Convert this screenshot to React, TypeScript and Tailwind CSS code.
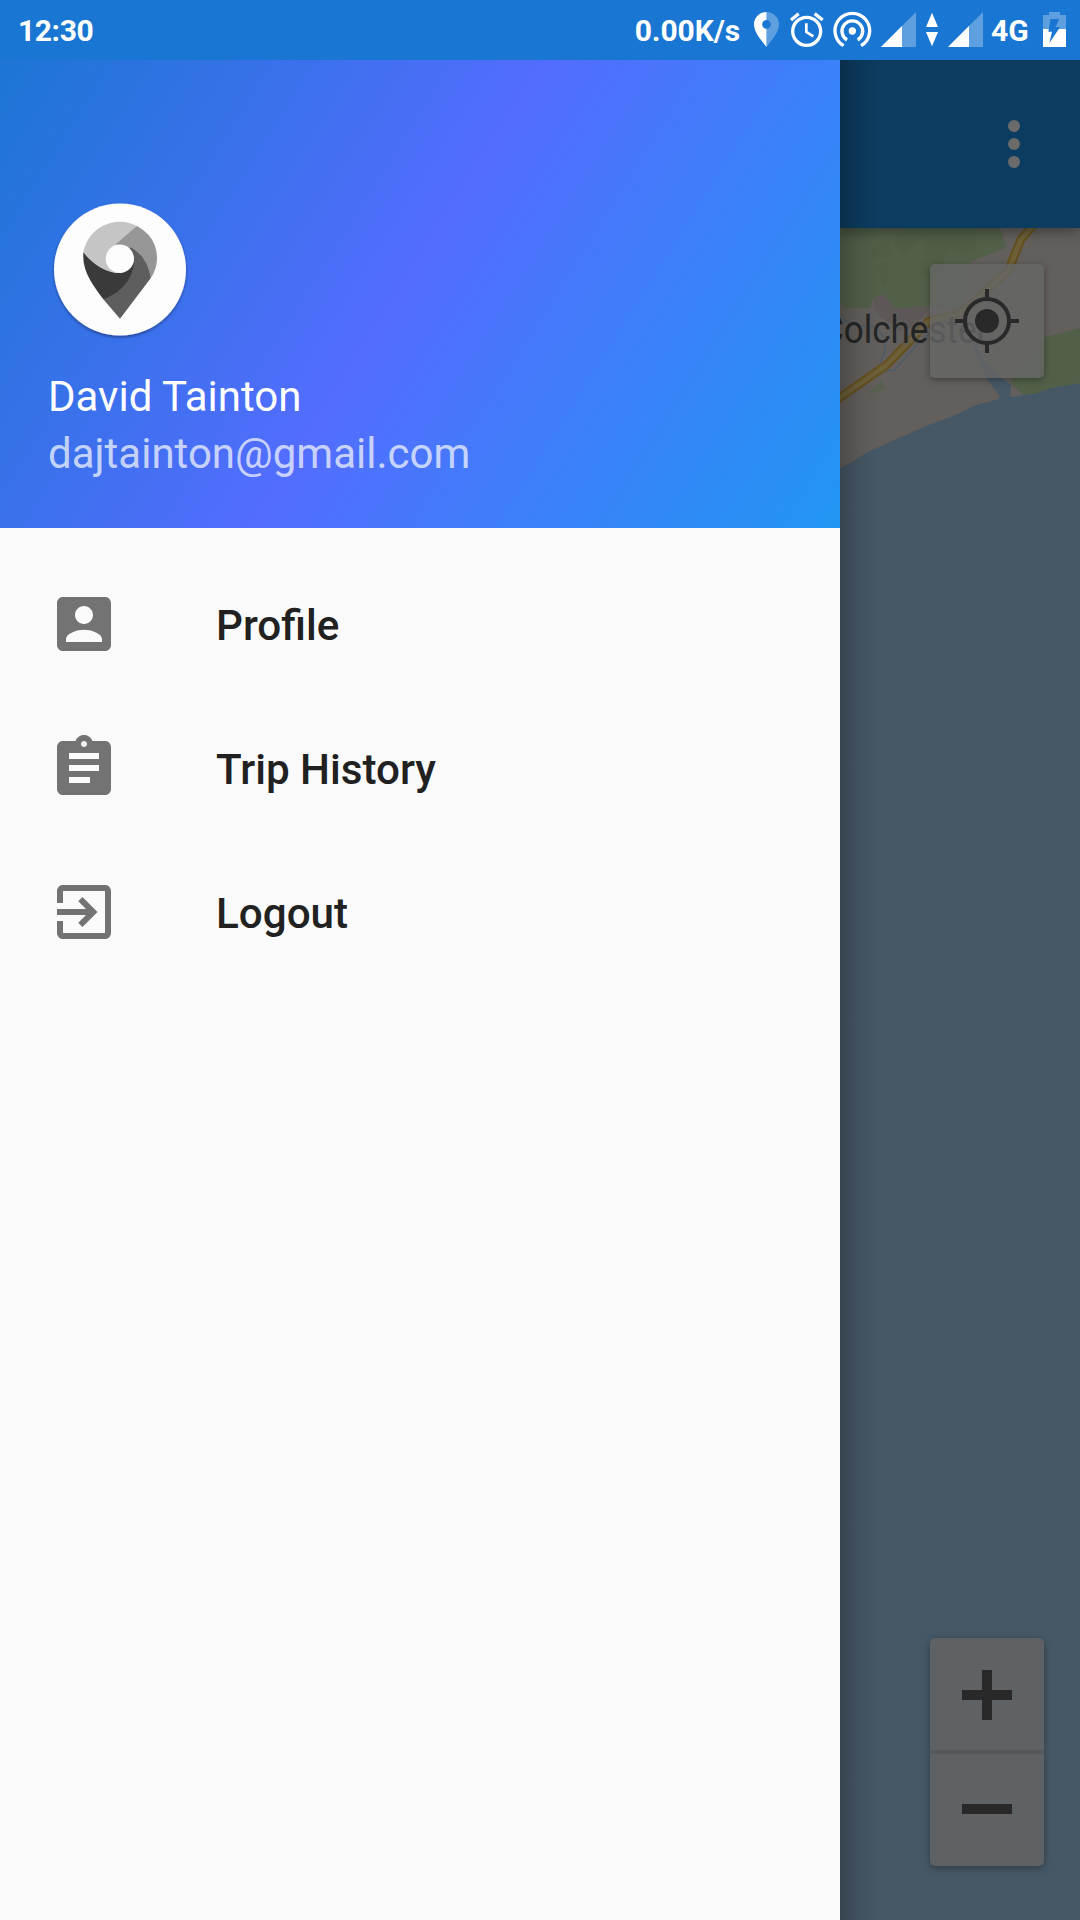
import type { ReactNode } from "react";

function SignalIcon() {
  return (
    <svg className="h-15 w-[35px]" viewBox="0 0 105 180">
      <path d="M0 141L105 36V141Z" fill="#fff" fillOpacity=".3" />
      <path d="M0 141L63 78V141Z" fill="#fff" />
    </svg>
  );
}

function StatusBar() {
  return (
    <header className="flex h-15 shrink-0 items-center justify-between bg-[#1976d2] pr-[14px] pl-[18px] text-[30px] leading-[60px] font-bold text-white">
      <span className="pt-[2px] tracking-[-0.4px]">12:30</span>
      <div className="flex items-center">
        <span className="mr-[14px] pt-[2px] tracking-[-0.1px]">0.00K/s</span>
        <svg className="mr-[11px] h-15 w-[25px]" viewBox="402 0 75 180">
          <path
            d="M439.500 36C418 36 402 53 402 73C402 98 425 122 439.500 141V86A13 13 0 0 1 439.500 60Z"
            fill="#fff"
          />
          <path
            d="M439.500 36C461 36 477 53 477 73C477 98 454 122 439.500 141V86A13 13 0 0 0 439.500 60Z"
            fill="#fff"
            fillOpacity=".3"
          />
        </svg>
        <svg className="mr-[9px] h-15 w-[34px]" viewBox="510 0 102 180" fill="none" stroke="#fff">
          <circle cx="560" cy="94" r="42" strokeWidth="10" />
          <path d="M559 70V96L580 109" strokeWidth="8" />
          <path d="M513 60L536 41M584 41L608 60" strokeWidth="10" />
        </svg>
        <svg className="mr-[9px] h-15 w-[39px]" viewBox="-52 0 117 180" fill="none" stroke="#fff" strokeWidth="10">
          <circle cx="6" cy="93" r="11" fill="#fff" stroke="none" />
          <path d="M-10 120A31 31 0 1 1 22 120" />
          <path d="M-20 137A52 52 0 1 1 32 137" />
        </svg>
        <SignalIcon />
        <svg className="mx-[10px] h-15 w-3" viewBox="0 0 36 180" fill="#fff">
          <path d="M18 38L36 81H0ZM0 96H36L18 139Z" />
        </svg>
        <SignalIcon />
        <span className="ml-[8px] w-[52px] pt-[2px]">4G</span>
        <svg className="h-15 w-[23px]" viewBox="579 0 69 180">
          <path d="M579 45H597V36H630V45H648V87H579Z" fill="#fff" fillOpacity=".3" />
          <path d="M579 87H648V141H579Z" fill="#fff" />
          <path d="M602 57H627L617 82H630L598 129L606 95H595Z" fill="#1976d2" />
        </svg>
      </div>
    </header>
  );
}

function Avatar() {
  return (
    <svg className="-ml-2 h-40 w-40" viewBox="0 0 480 480">
      <defs>
        <filter id="avatarShadow" x="-10%" y="-10%" width="120%" height="120%">
          <feDropShadow dx="0" dy="5" stdDeviation="4" floodColor="#000" floodOpacity=".4" />
        </filter>
      </defs>
      <circle cx="240" cy="238.500" r="198" fill="#fdfdfd" filter="url(#avatarShadow)" />
      <path d="M130 187A111 111 0 0 1 291 108L239 163V249C190 245 158 222 130 187Z" fill="#c5c5c5" />
      <path d="M291 108C335 132 351 168 351 207C351 226 344 247 332 265L280 220L228 162Z" fill="#969696" />
      <path d="M271 172C306 191 326 221 332 265L240 386L190 328L250 240Z" fill="#5e5e5e" />
      <path d="M130 187C158 222 196 249 239 249C261 247 275 233 282 212C280 265 248 305 190 328C158 282 126 246 130 187Z" fill="#3a3a3a" />
      <circle cx="239.500" cy="206" r="42.500" fill="#fdfdfd" />
    </svg>
  );
}

function MenuItem({ label, children }: { label: string; children: ReactNode }) {
  return (
    <li className="flex h-36 items-center pl-12">
      <svg className="h-18 w-18 shrink-0" viewBox="0 0 24 24" fill="#737373">
        {children}
      </svg>
      <span className="ml-24 pt-[3px] text-[42.2px] leading-[50px] font-medium text-[#212121]">{label}</span>
    </li>
  );
}

function Drawer() {
  return (
    <nav className="flex w-[840px] shrink-0 flex-col bg-[#fafafa]">
      <div className="flex h-[468px] flex-col bg-[linear-gradient(122.15deg,#1976d2_0%,#536dfe_50%,#2196f3_100%)] bg-[length:840px_528px] bg-[position:0_-60px] pt-[130px] pl-12 text-[42px] leading-[57px]">
        <Avatar />
        <p className="mt-[18px] text-white">David Tainton</p>
        <p className="text-white/70">dajtainton@gmail.com</p>
      </div>
      <ul className="pt-6">
        <MenuItem label="Profile">
          <path d="M3 5v14c0 1.100.89 2 2 2h14c1.100 0 2-.9 2-2V5c0-1.100-.9-2-2-2H5c-1.110 0-2 .9-2 2zm12 4c0 1.660-1.340 3-3 3s-3-1.340-3-3 1.340-3 3-3 3 1.340 3 3zm-9 8c0-2 4-3.100 6-3.100s6 1.100 6 3.100v1H6v-1z" />
        </MenuItem>
        <MenuItem label="Trip History">
          <path d="M19 3h-4.180C14.400 1.840 13.300 1 12 1c-1.300 0-2.400.84-2.820 2H5c-1.100 0-2 .9-2 2v14c0 1.100.9 2 2 2h14c1.100 0 2-.9 2-2V5c0-1.100-.9-2-2-2zm-7 0c.55 0 1 .45 1 1s-.45 1-1 1-1-.45-1-1 .45-1 1-1zm2 14H7v-2h7v2zm3-4H7v-2h10v2zm0-4H7V7h10v2z" />
        </MenuItem>
        <MenuItem label="Logout">
          <path d="M10.090 15.590L11.500 17l5-5-5-5-1.410 1.410L12.670 11H3v2h9.670l-2.580 2.590zM19 3H5c-1.110 0-2 .9-2 2v4h2V5h14v14H5v-4H3v4c0 1.100.89 2 2 2h14c1.100 0 2-.9 2-2V5c0-1.100-.9-2-2-2z" />
        </MenuItem>
      </ul>
    </nav>
  );
}

function MapDrawing() {
  return (
    <svg className="absolute inset-0 h-full w-full" viewBox="60 84 720 5076">
      <rect x="60" y="84" width="720" height="900" fill="#625f5c" />
      <path d="M60 84H541L557 143L448 187L453 240L438 290L415 325L330 322L228 326L190 283L158 295L150 324H78L60 312Z" fill="#526049" />
      <path d="M155 150L195 120L215 150L207 170L190 178L160 170ZM207 180V225L195 262L168 205L185 190ZM220 135L235 100L262 84L316 84V110L290 130L255 166ZM316 84H465V150L430 165L385 150L370 190L340 230L303 235V180L316 175Z" fill="#4e5f46" />
      <path d="M158 295L190 283L228 326L330 318L290 375L240 395L170 340Z" fill="#5d5757" />
      <path d="M780 384L672 412L571 549L612 586L780 556Z" fill="#526049" />
      <path d="M145 583L185 540L192 568Z" fill="#56604f" />
      <path d="M60 352C90 372 110 378 135 380C160 380 170 375 180 395C210 440 190 460 183 485L195 510L222 512L300 425L330 400" fill="none" stroke="#4b5c69" strokeWidth="4" />
      <path d="M455 425L470 430L490 480L540 530L573 555L571 590L580 600H535L540 590L500 535L475 480Z" fill="#465866" />
      <path d="M60 806L90 789L145 755L230 717L320 677L415 642L465 616L540 596L580 590L650 580L690 565L780 550V5160H60Z" fill="#465866" />
      <g fill="none" strokeLinejoin="round">
        <path d="M50 599L200 495L325 365L425 338L565 212L603 118L640 76" stroke="#65501f" strokeWidth="27" />
        <path d="M50 599L200 495L325 365L425 338L565 212L603 118L640 76" stroke="#6d6039" strokeWidth="14" />
      </g>
      <text
        x="3"
        y="428"
        textLength="502"
        lengthAdjust="spacingAndGlyphs"
        fontSize="117"
        fill="#242525"
        stroke="#625f5c"
        strokeOpacity=".6"
        strokeWidth="12"
        paintOrder="stroke"
      >
        Colchester
      </text>
    </svg>
  );
}

function MapPanel() {
  return (
    <main className="relative flex w-60 flex-col overflow-hidden">
      <div className="relative z-10 flex h-42 shrink-0 flex-col items-center justify-center gap-[6px] bg-[#0c3c60] pl-[108px] shadow-[0_4px_12px_rgba(0,0,0,0.35)]">
        <i className="h-3 w-3 rounded-full bg-[#6b6b6b]" />
        <i className="h-3 w-3 rounded-full bg-[#6b6b6b]" />
        <i className="h-3 w-3 rounded-full bg-[#6b6b6b]" />
      </div>
      <div className="relative flex flex-1 flex-col items-end justify-between pt-9 pr-9 pb-[54px]">
        <MapDrawing />
        <button className="relative h-[114px] w-[114px] rounded-[5px] bg-[#666666]/80 shadow-[0_2px_7px_rgba(0,0,0,0.35)]">
          <svg className="h-full w-full" viewBox="-57 -57 114 114" fill="none" stroke="#292929" strokeWidth="4">
            <circle r="22" />
            <circle r="12" fill="#292929" stroke="none" />
            <path d="M0-32V-22M0 22V32M-32 0H-22M22 0H32" />
          </svg>
        </button>
        <div className="relative flex h-[228px] w-[114px] flex-col rounded-[5px] bg-[#5e6265] shadow-[0_2px_7px_rgba(0,0,0,0.35)]">
          <button className="h-28 w-full">
            <svg className="h-28 w-full" viewBox="-57 -57 114 112" fill="none" stroke="#292929" strokeWidth="10">
              <path d="M-25 0H25M0-25V25" />
            </svg>
          </button>
          <div className="h-1 w-full bg-[#56595c]" />
          <button className="h-28 w-full">
            <svg className="h-28 w-full" viewBox="-57 -55 114 112" fill="none" stroke="#292929" strokeWidth="10">
              <path d="M-25 0H25" />
            </svg>
          </button>
        </div>
      </div>
      <div className="pointer-events-none absolute inset-y-0 left-0 z-20 w-10 bg-linear-to-r from-black/22 via-black/7 to-transparent" />
    </main>
  );
}

export default function App() {
  return (
    <div className="flex h-[1920px] w-[1080px] flex-col overflow-hidden font-[Roboto,sans-serif]">
      <StatusBar />
      <div className="flex min-h-0 flex-1">
        <Drawer />
        <MapPanel />
      </div>
    </div>
  );
}
